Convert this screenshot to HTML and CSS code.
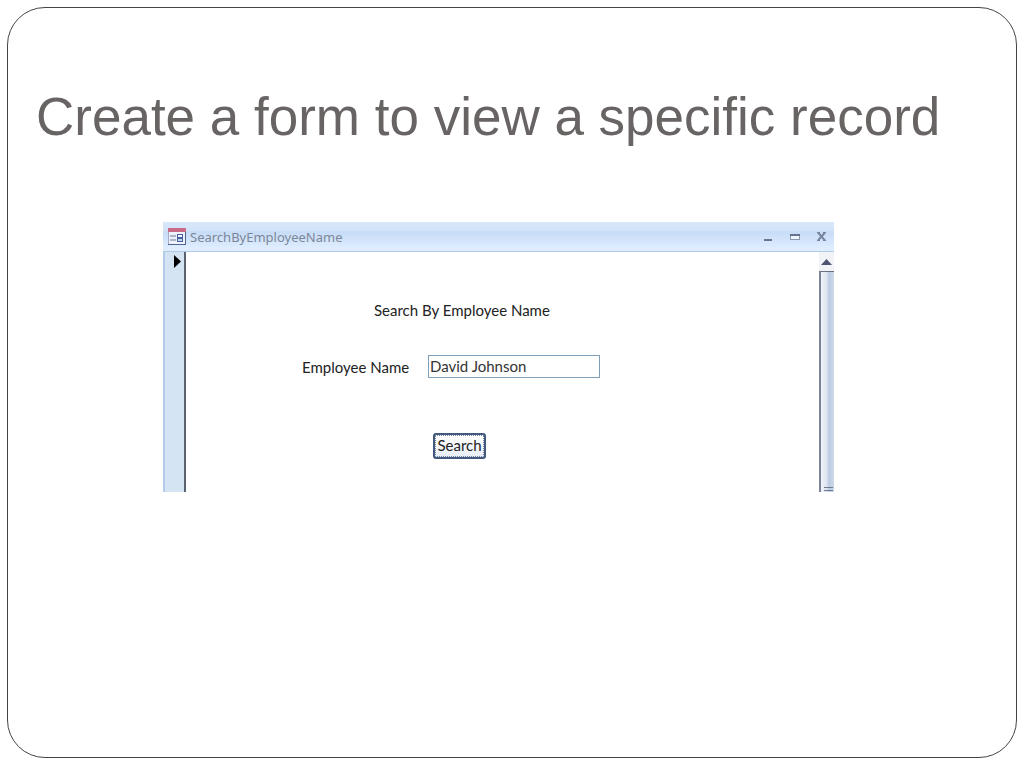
FILE: index.html
```html
<!DOCTYPE html>
<html lang="en">
<head>
  <meta charset="UTF-8">
  <title>Create a form to view a specific record</title>
  <link rel="stylesheet" href="styles.css">
</head>
<body>
  <main class="slide">
    <h1>Create a form to view a specific record</h1>

    <section class="window">
      <header class="titlebar">
        <svg class="form-icon" width="18" height="17" viewBox="0 0 18 17">
          <rect x="0.5" y="0.5" width="17" height="16" fill="#eef2fd" stroke="#a3adc8"/>
          <rect x="0" y="0" width="18" height="4" fill="#c96b86"/>
          <path d="M0 16.5h18M17.5 4v13" stroke="#53658f"/>
          <path d="M2 8h6M2 12h6" stroke="#6b7894"/>
          <rect x="9.5" y="6.5" width="5" height="3" fill="#fff" stroke="#4561a0"/>
          <rect x="9.5" y="10.5" width="5" height="3" fill="#c5d3ee" stroke="#4561a0"/>
        </svg>
        <span class="caption">SearchByEmployeeName</span>
        <div class="controls">
          <button type="button" aria-label="Minimize">
            <svg width="11" height="9" viewBox="0 0 11 9"><path d="M2 8h8" stroke="#69758d" stroke-width="2"/></svg>
          </button>
          <button type="button" aria-label="Maximize">
            <svg width="11" height="9" viewBox="0 0 11 9"><rect x="1.5" y="2.5" width="9" height="5" fill="#eef5ff" stroke="#8a96ad"/><path d="M1 3h10" stroke="#66728a" stroke-width="2"/></svg>
          </button>
          <button type="button" aria-label="Close">
            <svg width="11" height="9" viewBox="0 0 11 9"><path d="M2 0.5l7 8M9 0.5l-7 8" stroke="#78849b" stroke-width="2"/><path d="M1 0.5h3M7 0.5h3M1 8.5h3M7 8.5h3" stroke="#78849b"/></svg>
          </button>
        </div>
      </header>

      <div class="window-body">
        <div class="selector">
          <svg width="7" height="13" viewBox="0 0 7 13"><path d="M0 0l7 6.500-7 6.500z" fill="#000"/></svg>
        </div>
        <form class="search-form" onsubmit="return false">
          <h2>Search By Employee Name</h2>
          <label for="employeeName">Employee Name</label>
          <input type="text" id="employeeName" value="David Johnson">
          <button type="submit" class="search-button">Search</button>
        </form>
        <div class="scrollbar">
          <svg width="15" height="19" viewBox="0 0 15 19"><path d="M2 13l5.500-6 5.500 6z" fill="#4e5370"/></svg>
          <div class="thumb">
            <svg width="9" height="5" viewBox="0 0 9 5"><path d="M0 0.500h9M0 3.500h9" stroke="#727b8e"/></svg>
          </div>
        </div>
      </div>
    </section>
  </main>
</body>
</html>
```

FILE: styles.css
```css
* {
  box-sizing: border-box;
}
body {
  display: flex;
  height: 100vh;
  margin: 0;
  padding: 7px 7px 10px;
  background-color: white;
  font-family: "Liberation Sans", Arial, sans-serif;
}
.slide {
  flex: 1;
  border: 1px solid #444;
  border-radius: 38px;
  padding: 77px 28px 0;
}
h1 {
  margin: 0;
  font-size: 53px;
  font-weight: normal;
  line-height: 64px;
  color: #696464;
}
.window {
  max-width: 671px;
  margin: 73px 0 0 127px;
}
.titlebar {
  display: flex;
  align-items: center;
  height: 30px;
  padding: 0 7px 0 5px;
  background: linear-gradient(#d9e7f9 0, #d3e3f8 30%, #c7dcf7 34%, #dfedff 90%);
  border-bottom: 1px solid #b0cbe6;
}
.caption {
  flex: 1;
  margin-left: 4px;
  font-family: "Noto Sans", sans-serif;
  font-size: 13px;
  color: #7c8798;
}
.controls {
  display: flex;
  gap: 16px;
}
.controls button {
  display: flex;
  padding: 0;
  border: none;
  background: none;
}
.window-body {
  display: flex;
  height: 240px;
}
.selector {
  width: 23px;
  padding: 3px 0 0 9px;
  background-color: #d5e4f3;
  border-left: 2px solid #b3cceb;
  border-right: 2px solid #59626e;
}
.selector svg {
  display: block;
}
.search-form {
  flex: 1;
  display: grid;
  grid-template-columns: 126px 172px;
  align-content: start;
  align-items: center;
  padding: 48px 0 0 116px;
  font-family: Lato, sans-serif;
  font-size: 15px;
  line-height: 20px;
  color: #222;
}
.search-form h2 {
  grid-column: 1 / 3;
  margin: 0 0 35px 72px;
  font-size: 15px;
  font-weight: normal;
}
.search-form input {
  height: 23px;
  padding: 0 1px 1px;
  border: 1px solid #7fa0bb;
  font: inherit;
  color: #333;
}
.search-button {
  grid-column: 2;
  justify-self: start;
  width: 53px;
  height: 26px;
  margin: 55px 0 0 5px;
  padding: 0 0 2px;
  border: 2px solid #43597f;
  border-radius: 3px;
  outline: 1px dotted #7583a0;
  outline-offset: -3px;
  background: linear-gradient(#fff, #e8edf5);
  font: inherit;
  color: #222;
}
.scrollbar {
  display: flex;
  flex-direction: column;
  width: 15px;
  background-color: #f2f3f7;
}
.scrollbar svg {
  display: block;
}
.thumb {
  flex: 1;
  display: flex;
  align-items: flex-end;
  padding-left: 3px;
  border-top: 1px solid #687084;
  border-left: 2px solid #7b8498;
  background: linear-gradient(to right, #f0f3f9, #dfe6f1 45%, #bacce2 60%, #cddaea);
}
```
